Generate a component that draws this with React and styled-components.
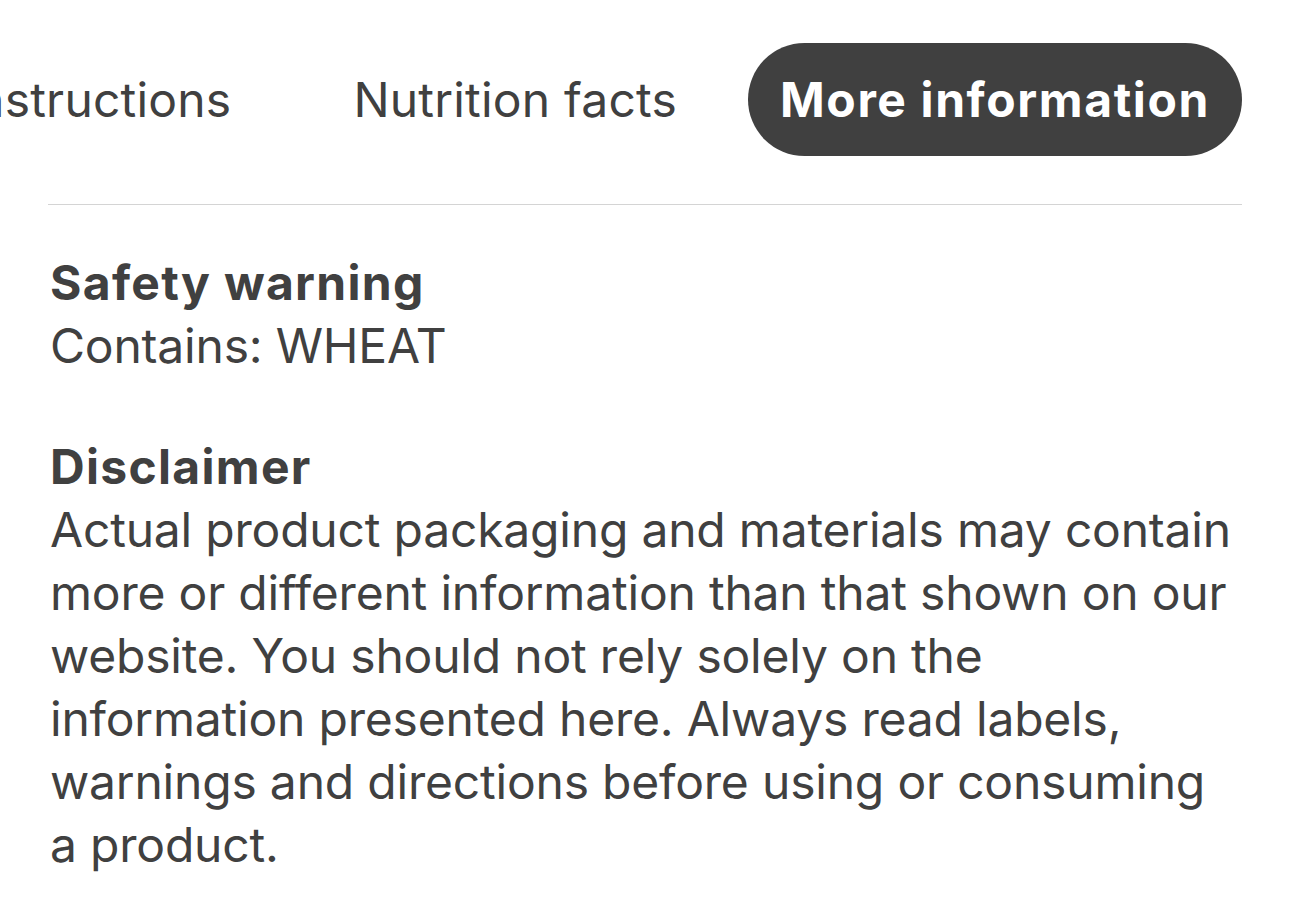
import React from "react";
import styled, { createGlobalStyle } from "styled-components";

const Global = createGlobalStyle`
  html, body { margin: 0; padding: 0; background: #ffffff; }
  body { font-family: Inter, "Noto Sans", "Liberation Sans", sans-serif; color: #404040; }
`;

const Page = styled.div`
  width: 1290px;
  height: 920px;
  overflow: hidden;
  box-sizing: border-box;
  padding: 43px 48px 0 48px;
`;

const TabBar = styled.div`
  display: flex;
  justify-content: flex-end;
  align-items: center;
  gap: 20px;
  overflow: hidden;
  margin-left: -48px;
`;

const Tab = styled.div`
  flex: none;
  height: 113px;
  display: flex;
  align-items: center;
  padding: 0 ${(p) => (p.$active ? 32 : 51)}px;
  border-radius: 57px;
  font-size: 48px;
  white-space: nowrap;
  letter-spacing: ${(p) => (p.$active ? "1.6px" : "0.2px")};
  font-weight: ${(p) => (p.$active ? 700 : 400)};
  color: ${(p) => (p.$active ? "#ffffff" : "#404040")};
  background: ${(p) => (p.$active ? "#404040" : "transparent")};
`;

const Divider = styled.hr`
  margin: 48px 0 0 0;
  border: 0;
  border-top: 1px solid #d4d4d4;
`;

const Content = styled.div`
  padding: 46px 2px 0 2px;
  display: flex;
  flex-direction: column;
  gap: 58px;
`;

const Section = styled.section`
  display: flex;
  flex-direction: column;
`;

const Heading = styled.h3`
  margin: 0;
  font-size: 48px;
  line-height: 63px;
  font-weight: 700;
  letter-spacing: 1.3px;
  color: #404040;
`;

const Body = styled.p`
  margin: 0;
  font-size: 48px;
  line-height: 63px;
  font-weight: 400;
  letter-spacing: -0.2px;
  color: #404040;
`;

export default function App() {
  return (
    <>
      <Global />
      <Page>
        <TabBar>
          <Tab>Instructions</Tab>
          <Tab>Nutrition facts</Tab>
          <Tab $active>More information</Tab>
        </TabBar>
        <Divider />
        <Content>
          <Section>
            <Heading>Safety warning</Heading>
            <Body>Contains: WHEAT</Body>
          </Section>
          <Section>
            <Heading>Disclaimer</Heading>
            <Body>
              Actual product packaging and materials may contain more or different information than that shown on our website. You should not rely solely on the information presented here. Always read labels, warnings and directions before using or consuming a product.
            </Body>
          </Section>
        </Content>
      </Page>
    </>
  );
}
